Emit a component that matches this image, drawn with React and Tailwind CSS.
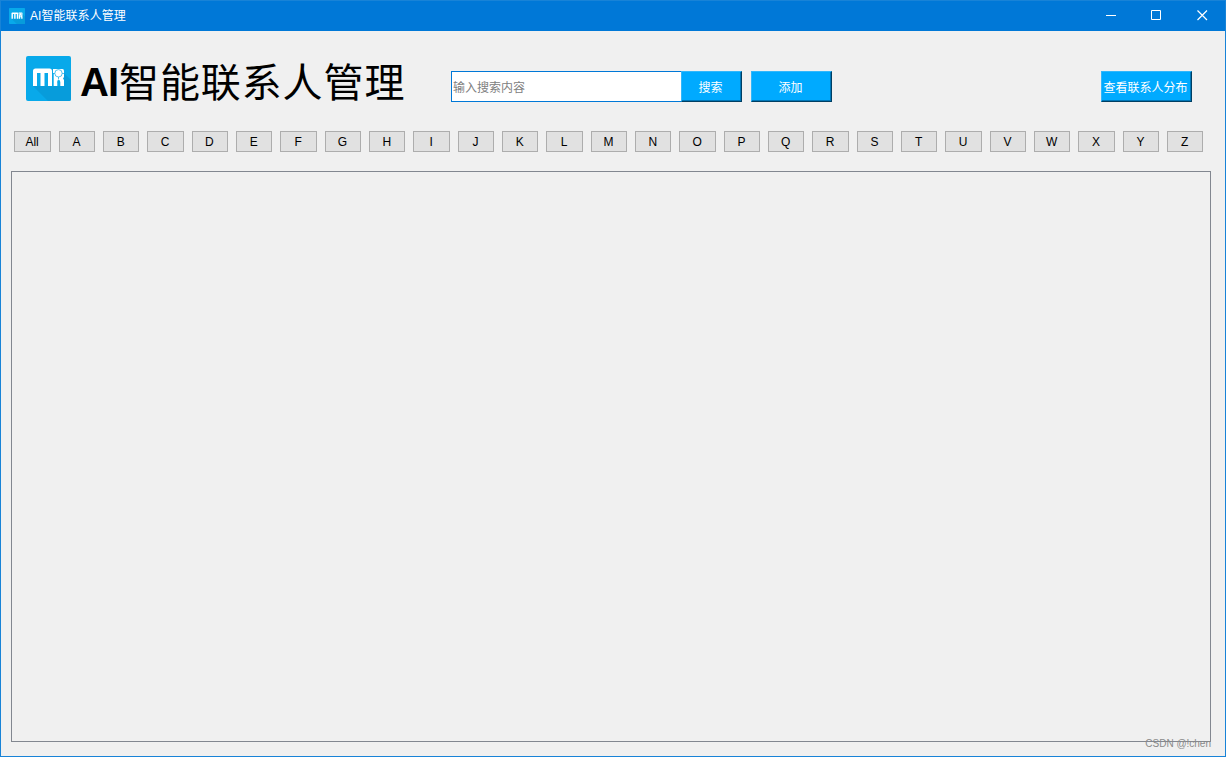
import { useState } from "react";

const LETTERS = ["All", ..."ABCDEFGHIJKLMNOPQRSTUVWXYZ"];

function Logo({ className }) {
  return (
    <svg viewBox="0 0 45 45" className={className}>
      <rect width="45" height="45" rx="2" fill="#08a9ea" />
      <path d="M7 30 22 45H43Q45 45 45 43V24L38 17V30Z" fill="#079cdb" />
      <path
        d="M7 30V15Q7 12.500 9.500 12.500H23.500Q26 12.500 26 15V30H22V17H18.500V30H14.500V17H11V30Z"
        fill="#fff"
      />
      <path
        d="M27 13H36.500Q38 13 38 15V21L37 22.500 38 24V30H34.300V26H31.300V30H27.700V17H27Z"
        fill="#fff"
      />
      <circle cx="32.500" cy="17.300" r="3.700" fill="#fff" stroke="#08a9ea" strokeWidth="0.700" />
      <path d="M32.500 21V23.500M26.500 17.500H28.800M36.200 17.500H38" stroke="#08a9ea" strokeWidth="0.700" />
      <circle cx="32.700" cy="25.500" r="1.400" fill="#08a9ea" />
    </svg>
  );
}

function BlueButton({ className, children }) {
  return (
    <button
      className={`h-[31px] shrink-0 whitespace-nowrap border border-t-[#32b7fb] border-l-[#32b7fb] border-r-[#003f63] border-b-[#003f63] bg-[#00aaff] pr-0.5 pt-0.5 text-xs text-white shadow-[inset_-1px_-1px_0_#0077b8] ${className}`}
    >
      {children}
    </button>
  );
}

export default function App() {
  const [query, setQuery] = useState("");

  return (
    <div className="relative flex h-[757px] w-[1226px] flex-col overflow-hidden border border-[#1883d7] bg-[#f0f0f0] font-['Liberation_Sans','Noto_Sans_CJK_SC',sans-serif] text-xs text-black">
      <header className="flex h-[30px] shrink-0 items-center bg-[#0078d7] pl-2 text-white">
        <Logo className="size-4" />
        <span className="ml-[5px] leading-none tracking-[0.05px]">AI智能联系人管理</span>
        <div className="ml-auto flex pb-0.5 pr-[17px]">
          <svg width="102" height="12" viewBox="0 0 102 12" fill="none" stroke="#fff">
            <path d="M0 6.500H10M45.500 1.500H54.500V10.500H45.500Z" />
            <path d="M91.500 1.500 101 11M101 1.500 91.500 11" strokeWidth="1.200" />
          </svg>
        </div>
      </header>

      <div className="flex h-[100px] shrink-0 items-start pl-[25px] pt-[25px]">
        <Logo className="size-[45px] shrink-0" />
        <h1 className="ml-[9px] flex w-[371px] shrink-0 whitespace-nowrap text-[40px]">
          <span className="w-[39px] font-bold leading-[52px] tracking-[-1px]">AI</span>
          <span className="font-['Noto_Sans_CJK_SC',sans-serif] font-normal leading-[48px] tracking-[0.9px]">智能联系人管理</span>
        </h1>
        <div className="mt-[15px] flex">
          <input
            value={query}
            onChange={(e) => setQuery(e.target.value)}
            placeholder="输入搜索内容"
            className="h-[31px] w-[230px] border border-r-0 border-[#0078d7] bg-white pl-px pt-0.5 text-xs placeholder:text-[#808080] focus:outline-none"
          />
          <BlueButton className="w-[61px]">搜索</BlueButton>
          <BlueButton className="ml-[9px] w-[81px]">添加</BlueButton>
        </div>
        <BlueButton className="ml-auto mr-[33px] mt-[15px] w-[91px]">查看联系人分布</BlueButton>
      </div>

      <nav className="ml-[13.4px] grid w-[1189px] shrink-0 grid-cols-27 gap-2">
        {LETTERS.map((l) => (
          <button key={l} className="h-[21px] border border-[#adadad] bg-[#e1e1e1] pr-px pt-px leading-[19px]">
            {l}
          </button>
        ))}
      </nav>

      <main className="ml-2.5 mt-[19px] h-[571px] w-[1200px] shrink-0 border border-[#828790]" />
      <span className="absolute bottom-[5px] right-[14px] text-[10px] leading-[14px] text-[#8a8a8a]">CSDN @!chen</span>
    </div>
  );
}
